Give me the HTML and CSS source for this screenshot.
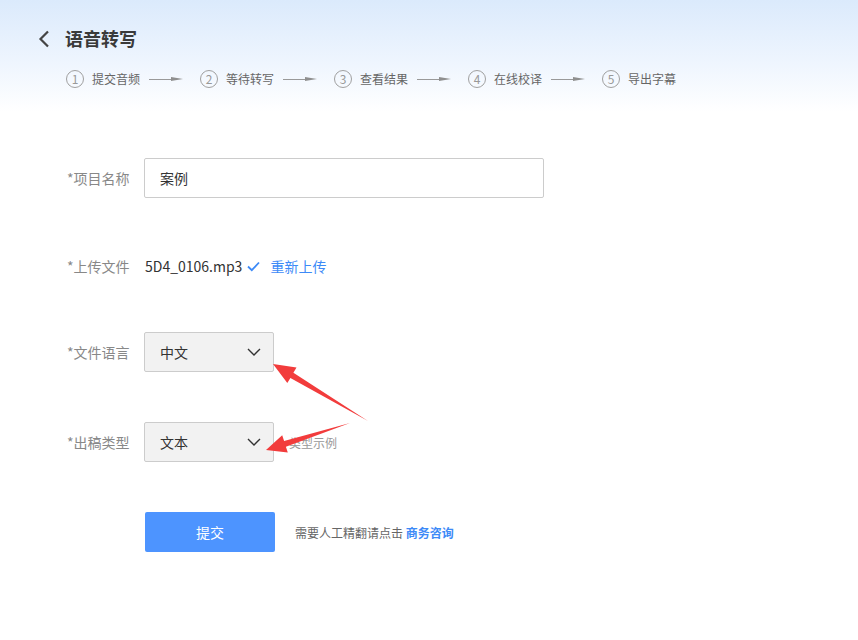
FILE: index.html
```html
<!DOCTYPE html>
<html lang="zh">
<head>
<meta charset="utf-8">
<title>语音转写</title>
<link rel="stylesheet" href="styles.css">
</head>
<body>
<div class="page">
  <header class="header">
    <div class="title-row">
      <svg class="back" width="12" height="18" viewBox="0 0 12 18"><path d="M10 1.5 L2.5 9 L10 16.5" fill="none" stroke="#444" stroke-width="2.2"/></svg>
      <h1 class="title">语音转写</h1>
    </div>
    <ol class="steps">
      <li class="step"><span class="num">1</span><span class="step-text">提交音频</span><span class="arrow"></span></li>
      <li class="step"><span class="num">2</span><span class="step-text">等待转写</span><span class="arrow"></span></li>
      <li class="step"><span class="num">3</span><span class="step-text">查看结果</span><span class="arrow"></span></li>
      <li class="step"><span class="num">4</span><span class="step-text">在线校译</span><span class="arrow"></span></li>
      <li class="step"><span class="num">5</span><span class="step-text">导出字幕</span></li>
    </ol>
  </header>

  <form class="form">
    <div class="row r1">
      <label class="label">*项目名称</label>
      <div class="input">案例</div>
    </div>
    <div class="row r2">
      <label class="label">*上传文件</label>
      <span class="filename">5D4_0106.mp3</span>
      <svg class="check" width="13" height="11" viewBox="0 0 13 11"><path d="M1 5.5 L4.8 9.2 L12 1.5" fill="none" stroke="#3d8af7" stroke-width="1.8"/></svg>
      <a class="link reupload">重新上传</a>
    </div>
    <div class="row r3">
      <label class="label">*文件语言</label>
      <div class="select"><span>中文</span><svg width="14" height="8" viewBox="0 0 14 8"><path d="M1 1 L7 7 L13 1" fill="none" stroke="#333" stroke-width="1.4"/></svg></div>
    </div>
    <div class="row r4">
      <label class="label">*出稿类型</label>
      <div class="select"><span>文本</span><svg width="14" height="8" viewBox="0 0 14 8"><path d="M1 1 L7 7 L13 1" fill="none" stroke="#333" stroke-width="1.4"/></svg></div>
      <span class="example">类型示例</span>
    </div>
    <div class="row r5">
      <span class="label"></span>
      <button type="button" class="submit">提交</button>
      <span class="note">需要人工精翻请点击 <a class="biz">商务咨询</a></span>
    </div>
  </form>

  <svg class="annot" width="858" height="640" viewBox="0 0 858 640">
    <polygon fill="#f23c3c" points="368,421 293.4,372.7 296.5,367.6 273,364 287.3,383 290.4,377.9"/>
    <polygon fill="#f23c3c" points="350,423 284.1,441 282.2,435.3 266,450 287.8,452.5 285.9,446.8"/>
  </svg>
</div>
</body>
</html>
```

FILE: styles.css
```css
* { box-sizing: border-box; }
html, body { margin: 0; padding: 0; background: #fff; }
body {
  font-family: "Noto Sans CJK SC", "Noto Sans", sans-serif;
  color: #333;
  width: 858px;
  height: 640px;
  overflow: hidden;
}
.page { position: relative; width: 858px; height: 640px; }

.header {
  height: 112px;
  background: linear-gradient(to bottom, #dbeafc 0%, #eef5fe 55%, #ffffff 100%);
  padding: 27px 0 0 38px;
}
.title-row { display: flex; align-items: center; height: 22px; }
.back { display: block; margin-right: 15px; position: relative; top: 1px; }
.title {
  margin: 0;
  font-size: 18px;
  font-weight: bold;
  color: #3a3a3a;
  line-height: 22px;
}
.steps {
  list-style: none;
  margin: 20px 0 0 28px;
  padding: 0;
  display: flex;
  align-items: center;
  height: 20px;
}
.step { display: flex; align-items: center; }
.num {
  width: 18px; height: 18px;
  border: 1px solid #a0a0a0;
  border-radius: 50%;
  font-size: 12px;
  color: #999;
  display: flex; align-items: center; justify-content: center;
  line-height: 1;
}
.step-text {
  margin-left: 8px;
  font-size: 12px;
  color: #666;
  line-height: 18px;
}
.arrow {
  position: relative;
  width: 34px;
  height: 6px;
  margin: 0 17px 0 9px;
}
.arrow::before {
  content: "";
  position: absolute;
  left: 0; right: 8px; top: 3px;
  height: 1px;
  background: #999;
}
.arrow::after {
  content: "";
  position: absolute;
  right: 0; top: 1px;
  width: 0; height: 0;
  border-left: 12px solid #8f8f8f;
  border-top: 2px solid transparent;
  border-bottom: 2px solid transparent;
}

.form { padding: 46px 0 0 67px; display: flex; flex-direction: column; }
.row { display: flex; align-items: center; height: 40px; }
.r2 { margin-top: 48px; }
.r3 { margin-top: 46px; }
.r4 { margin-top: 50px; }
.r5 { margin-top: 50px; }
.label { width: 77px; font-size: 14px; color: #888; flex: none; }
.input {
  width: 400px; height: 40px;
  border: 1px solid #ccc;
  border-radius: 2px;
  padding-left: 15px;
  display: flex; align-items: center;
  font-size: 14px; color: #333;
}
.filename { margin-left: 1px; font-size: 14px; color: #333; }
.check { margin-left: 5px; }
.link { color: #3d8af7; font-size: 14px; margin-left: 10px; cursor: pointer; }
.select {
  width: 130px; height: 40px;
  background: #f2f2f2;
  border: 1px solid #ccc;
  border-radius: 2px;
  display: flex; align-items: center; justify-content: space-between;
  padding: 0 12px 0 15px;
  font-size: 14px; color: #333;
}
.example { margin-left: 15px; font-size: 12px; color: #999; }
.submit {
  margin-left: 1px;
  width: 130px; height: 40px;
  background: #4d94ff;
  border: none;
  border-radius: 2px;
  color: #fff;
  font-family: inherit;
  font-size: 14px;
}
.note { margin-left: 20px; font-size: 12px; color: #666; }
.biz { color: #3d8af7; font-weight: bold; }

.annot { position: absolute; left: 0; top: 0; pointer-events: none; }
```
